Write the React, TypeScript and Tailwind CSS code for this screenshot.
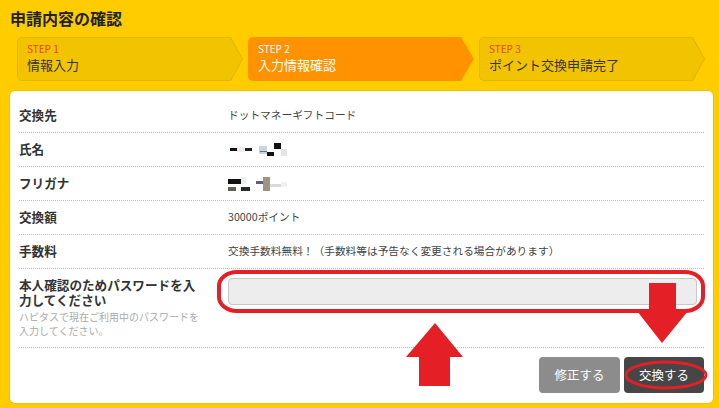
import React from 'react';

const jp = { fontFamily: '"Noto Sans CJK JP", "Noto Sans", sans-serif' };

type Step = { no: string; label: string; active?: boolean };

const steps: Step[] = [
  { no: 'STEP 1', label: '情報入力' },
  { no: 'STEP 2', label: '入力情報確認', active: true },
  { no: 'STEP 3', label: 'ポイント交換申請完了' },
];

function StepBox({ step }: { step: Step }) {
  if (step.active) {
    return (
      <div className="w-[226px] h-[44px] bg-[#ff9200] rounded-l-[5px] [clip-path:polygon(0_0,calc(100%-13px)_0,100%_50%,calc(100%-13px)_100%,0_100%)] pl-[10px] pt-[5px] text-white">
        <div className="text-[10px] leading-[14px]">{step.no}</div>
        <div className="text-[13px] leading-[17px]">{step.label}</div>
      </div>
    );
  }
  return (
    <div className="w-[226px] h-[44px] bg-[#e3b600] rounded-l-[5px] [clip-path:polygon(0_0,calc(100%-12px)_0,100%_50%,calc(100%-12px)_100%,0_100%)] p-px">
      <div className="h-full bg-[#f2c300] rounded-l-[4px] [clip-path:polygon(0_0,calc(100%-12px)_0,100%_50%,calc(100%-12px)_100%,0_100%)] pl-[9px] pt-[4px]">
        <div className="text-[10px] leading-[14px] text-[#e8402a]">{step.no}</div>
        <div className="text-[13px] leading-[17px] text-[#333]">{step.label}</div>
      </div>
    </div>
  );
}

// mosaic blocks standing in for the blurred name
function NameMosaic() {
  return (
    <svg width="62" height="16" viewBox="0 0 62 16">
      <rect x="2" y="6" width="7" height="3" fill="#111" />
      <rect x="9" y="5" width="8" height="5" fill="#f6e8ee" />
      <rect x="17" y="6" width="7" height="3" fill="#222" />
      <rect x="31" y="4" width="8" height="8" fill="#c9d6dc" />
      <rect x="32" y="9" width="7" height="1" fill="#6a747a" />
      <rect x="39" y="10" width="7" height="4" fill="#111" />
      <rect x="46" y="1" width="7" height="6" fill="#111" />
      <rect x="53" y="7" width="6" height="7" fill="#e4e4e6" />
    </svg>
  );
}

function KanaMosaic() {
  return (
    <svg width="62" height="18" viewBox="0 0 62 18">
      <rect x="0" y="4" width="13" height="5" fill="#111" />
      <rect x="13" y="2" width="5" height="7" fill="#eceef6" />
      <rect x="0" y="12" width="8" height="4" fill="#5f5f58" />
      <rect x="13" y="12" width="9" height="4" fill="#2a2a22" />
      <rect x="28" y="6" width="7" height="3" fill="#5d5f78" />
      <rect x="35" y="2" width="7" height="14" fill="#a09382" />
      <rect x="42" y="9" width="11" height="3" fill="#dadada" />
      <rect x="53" y="7" width="6" height="5" fill="#f1f1f1" />
    </svg>
  );
}

const rows: { label: string; value: React.ReactNode }[] = [
  { label: '交換先', value: 'ドットマネーギフトコード' },
  { label: '氏名', value: <NameMosaic /> },
  { label: 'フリガナ', value: <KanaMosaic /> },
  { label: '交換額', value: '30000ポイント' },
  { label: '手数料', value: '交換手数料無料！（手数料等は予告なく変更される場合があります）' },
];

export default function App() {
  return (
    <div className="relative w-[719px] h-[408px] bg-[#ffcc00] overflow-hidden" style={jp}>
      <div className="px-[10px] pt-[8px]">
        <h1 className="text-[16px] leading-[20px] font-bold text-[#222]">申請内容の確認</h1>

        <div className="flex gap-[5px] pl-[7px] mt-[9px]">
          {steps.map((s) => (
            <StepBox key={s.no} step={s} />
          ))}
        </div>

        <div className="mt-[10px] w-[703px] bg-white rounded-[5px] shadow-[0_0_0_1px_#f0c000] pt-[8px] px-[9px] pb-[10px]">
          {rows.map((r) => (
            <div key={r.label} className="flex items-center h-[34px] border-b border-dotted border-[#bbb]">
              <div className="w-[209px] text-[12.6px] font-bold text-[#333]">{r.label}</div>
              <div className="text-[10.7px] text-[#444] flex items-center">{r.value}</div>
            </div>
          ))}

          <div className="flex items-start pt-[8px] pb-[10px] border-b border-dotted border-[#bbb]">
            <div className="w-[209px]">
              <div className="w-[185px] text-[12.6px] leading-[15px] font-bold text-[#333]">
                本人確認のためパスワードを入力してください
              </div>
              <div className="w-[185px] mt-[3px] text-[10px] leading-[13.5px] text-[#aaa]">
                ハピタスで現在ご利用中のパスワードを入力してください。
              </div>
            </div>
            <input
              type="password"
              className="mt-px w-[469px] h-[27px] bg-[#ededed] border border-[#c8c8c8] rounded-[4px] outline-none"
            />
          </div>

          <div className="flex justify-end gap-[4px] pt-[9px]">
            <button className="w-[81px] h-[36px] bg-[#8c8c8c] rounded-[4px] text-white text-[12.5px]">修正する</button>
            <button className="w-[80px] h-[36px] bg-[#464646] rounded-[4px] text-white text-[12.5px]">交換する</button>
          </div>
        </div>
      </div>

      {/* red annotations drawn over the page */}
      <svg className="absolute inset-0 pointer-events-none" width="719" height="408" viewBox="0 0 719 408">
        <rect x="219" y="272" width="484" height="39" rx="18" ry="14" fill="none" stroke="#e41f26" strokeWidth="4" />
        <ellipse cx="666" cy="375" rx="40" ry="13" fill="none" stroke="#e41f26" strokeWidth="3" />
        <polygon points="649,283 676,283 676,311 688,311 662,343 637,311 649,311" fill="#e41f26" />
        <polygon points="435,323 463,357 450,357 450,386 419,386 419,357 406,357" fill="#e41f26" />
      </svg>
    </div>
  );
}
